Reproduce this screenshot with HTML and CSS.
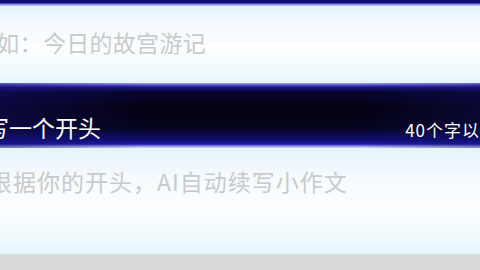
FILE: index.html
```html
<!DOCTYPE html>
<html lang="zh-CN">
<head>
  <meta charset="UTF-8" />
  <meta name="viewport" content="width=device-width, initial-scale=1.0"/>
  <title>AI续写小作文</title>
  <link rel="stylesheet" href="styles.css">
</head>
<body>

  <div class="page">
    <div class="top-bar"></div>

    <div class="field field-title">
      <span class="placeholder">例如：今日的故宫游记</span>
    </div>

    <div class="band">
      <span class="band-title">请写一个开头</span>
      <span class="band-hint">40个字以内</span>
    </div>

    <div class="field field-body">
      <span class="placeholder">根据你的开头，AI自动续写小作文</span>
    </div>

    <div class="bottom"></div>
  </div>

</body>
</html>
```

FILE: styles.css
```css
html, body {
  margin: 0;
  padding: 0;
  overflow: hidden;
}

body {
  width: 480px;
  height: 270px;
  background: #dadada;
  font-family: "Noto Sans CJK SC", "Noto Sans", sans-serif;
}

.page {
  display: flex;
  flex-direction: column;
  height: 270px;
  overflow: hidden;
}

.top-bar {
  height: 6px;
  flex-shrink: 0;
  background: linear-gradient(#0e0a6e 0, #14107c 3px, #7c7ad8 4px, #c8d4f4 6px);
}

.field {
  flex-shrink: 0;
  display: flex;
  align-items: center;
  white-space: nowrap;
  background: linear-gradient(#e6f2fb 0, #f4fafe 25%, #fcfeff 55%, #f0fafc 85%, #e2f6f9 100%);
}

.field-title {
  height: 77px;
  padding-bottom: 6px;
  box-sizing: border-box;
}

.field-body {
  height: 106px;
  align-items: flex-start;
}

.placeholder {
  font-size: 23px;
  color: #c8cacc;
  letter-spacing: 0.3px;
}

.field-title .placeholder {
  margin-left: -27px;
}

.field-body .placeholder {
  margin-left: -11px;
  margin-top: 16px;
  letter-spacing: 1px;
}

.band {
  flex-shrink: 0;
  height: 65px;
  display: flex;
  align-items: flex-end;
  justify-content: space-between;
  white-space: nowrap;
  padding-bottom: 4px;
  box-sizing: border-box;
  background:
    linear-gradient(90deg, rgba(20, 16, 110, 0.45) 0, rgba(0, 0, 0, 0) 30%, rgba(0, 0, 0, 0) 75%, rgba(20, 18, 100, 0.35) 100%),
    linear-gradient(#a8a6ec 0, #5a55cc 2px, #1c1888 4px, #07052e 9px, #030211 40%, #050420 70%, #120e78 88%, #1e19a6 94%, #8c8ae0 97%, #d6e0f8 100%);
}

.band-title {
  font-size: 23px;
  color: #ffffff;
  margin-left: -37px;
}

.band-hint {
  font-size: 17px;
  color: #ffffff;
  letter-spacing: 1px;
  margin-right: -18px;
  margin-bottom: 2px;
}

.bottom {
  flex: 1;
  background: #dadada;
}
```
